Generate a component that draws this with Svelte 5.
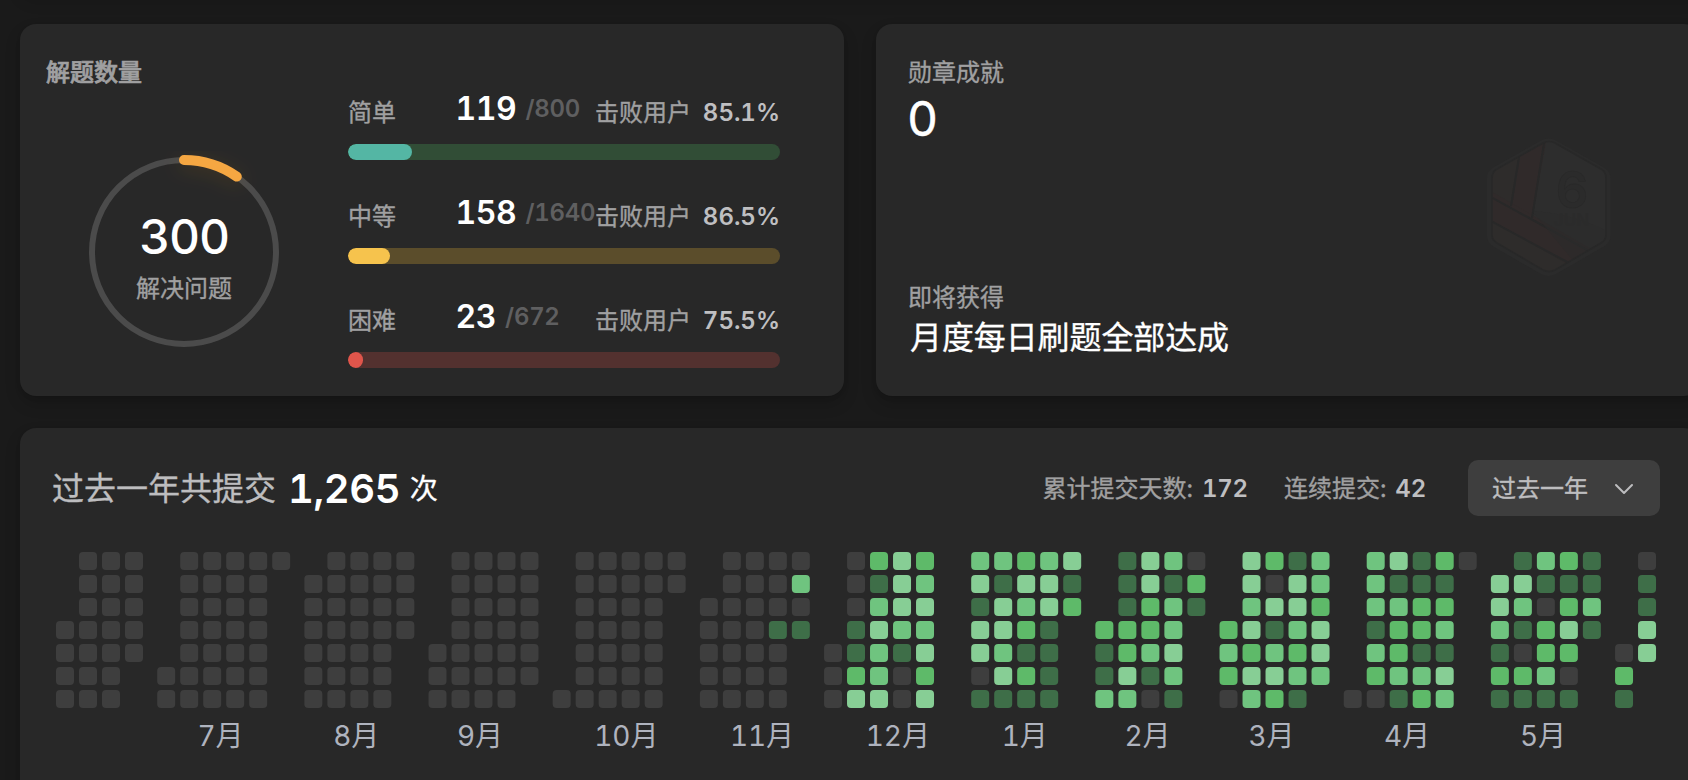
<script>
  const levels = [
    { name: '简单', solved: 119, total: 800, beats: '85.1%', kind: 'easy' },
    { name: '中等', solved: 158, total: 1640, beats: '86.5%', kind: 'medium' },
    { name: '困难', solved: 23, total: 672, beats: '75.5%', kind: 'hard' }
  ];

  // Each string is one week, Sunday to Saturday; '.' marks a day outside the month.
  const full = '0000000';
  const months = [
    { weeks: ['...0000', full, full, '00000..'] },
    { label: '7月', x: 197.5, weeks: ['.....00', full, full, full, full, '0......'] },
    { label: '8月', x: 333.3, weeks: ['.000000', full, full, full, '0000...'] },
    { label: '9月', x: 457, weeks: ['....000', full, full, full, '000000.'] },
    { label: '10月', x: 594.3, weeks: ['......0', full, full, full, full, '00.....'] },
    { label: '11月', x: 729.9, weeks: ['..00000', full, full, '0001000', '0301...'] },
    { label: '12月', x: 865.8, weeks: ['....000', '0001124', '2134334', '4443100', '2343424', '.......'] },
    { label: '1月', x: 1001.7, weeks: ['3414401', '3144341', '2432121', '3441111', '412....'] },
    { label: '2月', x: 1124.5, weeks: ['...2113', '1112243', '4422310', '3133431', '021....'] },
    { label: '3月', x: 1248.5, weeks: ['...2320', '4434243', '2041342', '1443231', '332443.'] },
    { label: '4月', x: 1384, weeks: ['......0', '3331320', '4132231', '1122132', '2123143', '0......'] },
    { label: '5月', x: 1520, weeks: ['.443121', '1431021', '3102231', '2124201', '1131...'] },
    { weeks: ['....021', '01144..'] }
  ];

  const cells = [];
  let left = 0;
  for (const m of months) {
    for (const w of m.weeks) {
      [...w].forEach((c, d) => {
        if (c !== '.') cells.push({ x: left, y: d * 23, level: c });
      });
      left += 23;
    }
    left += 9.17;
  }
</script>

<main>
  <div class="above"></div>
  <div class="top">
    <section class="card solved">
      <div class="overview">
        <h2>解题数量</h2>
        <div class="ring">
          <svg width="200" height="200" viewBox="0 0 200 200">
            <defs>
              <filter id="glow" x="-60%" y="-50%" width="220%" height="350%">
                <feDropShadow dx="0" dy="4" stdDeviation="9" flood-color="#ffa116" flood-opacity=".13" />
              </filter>
            </defs>
            <circle cx="100" cy="100" r="92" fill="none" stroke="#4b4b4b" stroke-width="6" />
            <path d="M100 8A92 92 0 0 1 152.8 24.6" fill="none" stroke="#f5a742" stroke-width="10" stroke-linecap="round" filter="url(#glow)" />
          </svg>
          <div class="ring-text">
            <strong>300</strong>
            <span>解决问题</span>
          </div>
        </div>
      </div>
      <div class="levels">
        {#each levels as l}
          <div class="level {l.kind}">
            <div class="line">
              <span class="name">{l.name}</span>
              <span class="count">{l.solved}</span>
              <span class="total">/{l.total}</span>
              <span class="beats">击败用户</span>
              <span class="pct">{l.beats}</span>
            </div>
            <div class="track"><div class="fill" style:width="{Math.max((l.solved / l.total) * 432, 15)}px"></div></div>
          </div>
        {/each}
      </div>
    </section>

    <section class="card medals">
      <div class="medal-text">
        <span class="cap">勋章成就</span>
        <strong>0</strong>
        <span class="cap next">即将获得</span>
        <span class="goal">月度每日刷题全部达成</span>
      </div>
      <svg class="badge" width="124" height="140" viewBox="0 0 124 140">
        <defs>
          <clipPath id="hex"><path d="M56 6Q62 3 68 6L114 32Q119 35 119 41V98Q119 103 114 106L68 133Q62 136 56 133L10 106Q5 103 5 98V41Q5 35 10 32Z" /></clipPath>
        </defs>
        <path d="M54 3.500Q61.500 -.5 69 3.500L116 30Q123.500 34 123.500 41V99Q123.500 106 116 110L69 137Q61.500 141 54 137L7 110Q0 106 0 99V41Q0 34 7 30Z" fill="#2b2b2b" />
        <g clip-path="url(#hex)">
          <rect width="124" height="140" fill="#2d2d2d" />
          <path d="M0 0H34L25 70L0 56Z" fill="#2e2c2b" />
          <path d="M34 14L60 0L45 81L25 69Z" fill="#302a2a" />
          <path d="M0 52L104 112L82 132L0 83Z" fill="#302a2a" />
          <path d="M0 81L84 129L62 142L0 112Z" fill="#2e2c2b" />
          <g fill="none" stroke="#282828" stroke-width="2">
            <path d="M32 20L24 69M58 0L45 81M0 58L44 82L102 114M2 83L82 126" />
          </g>
          <path d="M45 74Q85 76 124 96V140H100Z" fill="#2b2b2b" opacity=".6" />
        </g>
        <path d="M56 6Q62 3 68 6L114 32Q119 35 119 41V98Q119 103 114 106L68 133Q62 136 56 133L10 106Q5 103 5 98V41Q5 35 10 32Z" fill="none" stroke="#282828" stroke-width="1.6" />
        <text text-anchor="middle" font-weight="600" fill="#2b2b2b"><tspan x="85" y="71" font-size="51" stroke="#292929" stroke-width=".7">6</tspan><tspan x="84.500" y="88.500" font-size="17">JUN</tspan></text>
      </svg>
    </section>
  </div>

  <section class="card activity">
    <header>
      <div class="headline">
        <span>过去一年共提交</span><strong>1,265</strong><em>次</em>
      </div>
      <div class="facts">
        <span>累计提交天数:</span><b>172</b>
        <span class="second">连续提交:</span><b>42</b>
      </div>
      <button>
        <span>过去一年</span>
        <svg width="20" height="12" viewBox="0 0 20 12"><path d="M2 2L10 10L18 2" fill="none" stroke="#bdbdbf" stroke-width="2" stroke-linecap="round" stroke-linejoin="round" /></svg>
      </button>
    </header>
    <svg class="calendar" width="1620" height="212" viewBox="0 0 1620 212">
      {#each cells as c}
        <rect x={c.x} y={c.y} width="18" height="18" rx="4" class="l{c.level}" />
      {/each}
      {#each months as m}
        {#if m.label}<text x={m.x - 56} y="194.300">{m.label}</text>{/if}
      {/each}
    </svg>
  </section>
</main>

<style>
  :global(body) {
    margin: 0;
    background: #1a1a1a;
    overflow: hidden;
  }
  main {
    box-sizing: border-box;
    width: 1688px;
    height: 780px;
    overflow: hidden;
    display: flex;
    flex-direction: column;
    padding-left: 20px;
    font-family: Inter, 'Noto Sans CJK SC', sans-serif;
    font-size: 24px;
    line-height: 32px;
    font-feature-settings: 'tnum';
    color: #a0a0a1;
    white-space: nowrap;
  }
  .card, .above {
    box-sizing: border-box;
    background: #282828;
    border-radius: 16px;
    box-shadow: 0 2px 4px rgba(0, 0, 0, .08), 0 8px 16px rgba(0, 0, 0, .16);
  }
  .above {
    width: 1680px;
    height: 40px;
    margin-top: -48px;
    margin-bottom: 32px;
    flex: none;
  }
  .top {
    display: flex;
    gap: 32px;
    height: 372px;
    flex: none;
  }
  .solved, .medals {
    width: 824px;
    flex: none;
    display: flex;
  }
  .overview {
    width: 328px;
    flex: none;
    padding-top: 33px;
  }
  h2 {
    margin: 0 0 0 26px;
    font-size: 24px;
    line-height: 32px;
    font-weight: 500;
    -webkit-text-stroke: .7px currentColor;
  }
  .name, .beats, .cap, .ring-text span, .facts span, .headline span, button span {
    -webkit-text-stroke: .35px currentColor;
  }
  .ring {
    display: grid;
    justify-items: center;
    align-items: center;
    width: 200px;
    margin: 63px 0 0 64px;
  }
  .ring > * { grid-area: 1 / 1; }
  .ring svg { overflow: visible; }
  .ring-text {
    display: flex;
    flex-direction: column;
    align-items: center;
    padding-top: 10px;
  }
  .ring-text strong {
    font-size: 48px;
    line-height: 56px;
    font-weight: 500;
    color: #fff;
    letter-spacing: -1.2px;
    margin-top: -1px;
    margin-bottom: 8px;
  }
  .levels {
    width: 432px;
    flex: none;
    padding-top: 69px;
  }
  .level { height: 104px; }
  .line {
    display: flex;
    align-items: center;
    width: 432px;
    height: 40px;
  }
  .name { width: 107.500px; }
  .count {
    color: #fff;
    font-size: 32px;
    font-weight: 600;
    letter-spacing: -.4px;
    margin-right: 9px;
    margin-top: -8px;
  }
  .total {
    color: #5f5f60;
    font-weight: 600;
    letter-spacing: -.3px;
    flex: 1;
    width: 0;
    margin-top: -8px;
  }
  .beats { width: 107px; }
  .pct {
    width: 78px;
    color: #bfbfc1;
    font-weight: 600;
    display: flex;
    justify-content: flex-end;
  }
  .track {
    width: 432px;
    height: 16px;
    margin-top: 11px;
    border-radius: 8px;
    overflow: hidden;
  }
  .fill { height: 100%; border-radius: 8px; }
  .easy .track { background: #314d36; }
  .easy .fill { background: #54b6a4; }
  .medium .track { background: #5b4d2b; }
  .medium .fill { background: #f6c34d; }
  .hard .track { background: #53312f; }
  .hard .fill { background: #e0554b; }

  .medal-text {
    box-sizing: border-box;
    display: flex;
    flex-direction: column;
    width: 611px;
    padding: 33px 0 0 32px;
  }
  .medal-text strong {
    font-size: 48px;
    line-height: 56px;
    font-weight: 400;
    -webkit-text-stroke: .5px #fff;
    color: #fff;
    margin: 2px 0 0 -1px;
  }
  .next { margin-top: 135px; }
  .goal {
    color: #fff;
    font-size: 32px;
    line-height: 40px;
    font-weight: 400;
    -webkit-text-stroke: .3px #fff;
    letter-spacing: -.1px;
    margin: 3.500px 0 0 2px;
  }
  .badge { margin-top: 113px; flex: none; }

  .activity {
    width: 1680px;
    height: 400px;
    margin-top: 32px;
    flex: none;
    padding: 32px 40px 0 32px;
  }
  header {
    display: flex;
    align-items: center;
    height: 56px;
    width: 1608px;
    margin-bottom: 36px;
  }
  .headline {
    display: flex;
    align-items: center;
    flex: 1;
    padding-top: 2px;
    font-size: 32px;
    line-height: 56px;
    color: #bdbdbf;
  }
  .headline strong {
    font-size: 40px;
    font-weight: 600;
    letter-spacing: -.4px;
    color: #fff;
    margin: 0 9.500px 0 12px;
  }
  .headline em {
    font-size: 28px;
    font-style: normal;
    font-weight: 400;
    -webkit-text-stroke: .3px #fff;
    color: #fff;
  }
  .facts { display: flex; margin-right: 42px; padding-top: 2px; }
  .facts b {
    font-weight: 600;
    letter-spacing: -.2px;
    color: #bfbfc1;
    margin-left: 9px;
  }
  .facts .second { margin-left: 36px; }
  button {
    box-sizing: border-box;
    display: flex;
    align-items: center;
    justify-content: space-between;
    width: 192px;
    height: 56px;
    padding: 2px 26px 0 24px;
    border: 0;
    border-radius: 10px;
    background: #3e3e3e;
    color: #bdbdbf;
    font: inherit;
    margin: 0;
  }
  .calendar {
    display: block;
    margin-left: 4px;
    overflow: visible;
  }
  .calendar text {
    font-size: 28px;
    fill: #afb3be;
    letter-spacing: -.1px;
  }
  .l0 { fill: #3e3e3e; }
  .l1 { fill: #3e6e48; }
  .l2 { fill: #5eba69; }
  .l3 { fill: #6fc47f; }
  .l4 { fill: #87ce95; }
</style>
